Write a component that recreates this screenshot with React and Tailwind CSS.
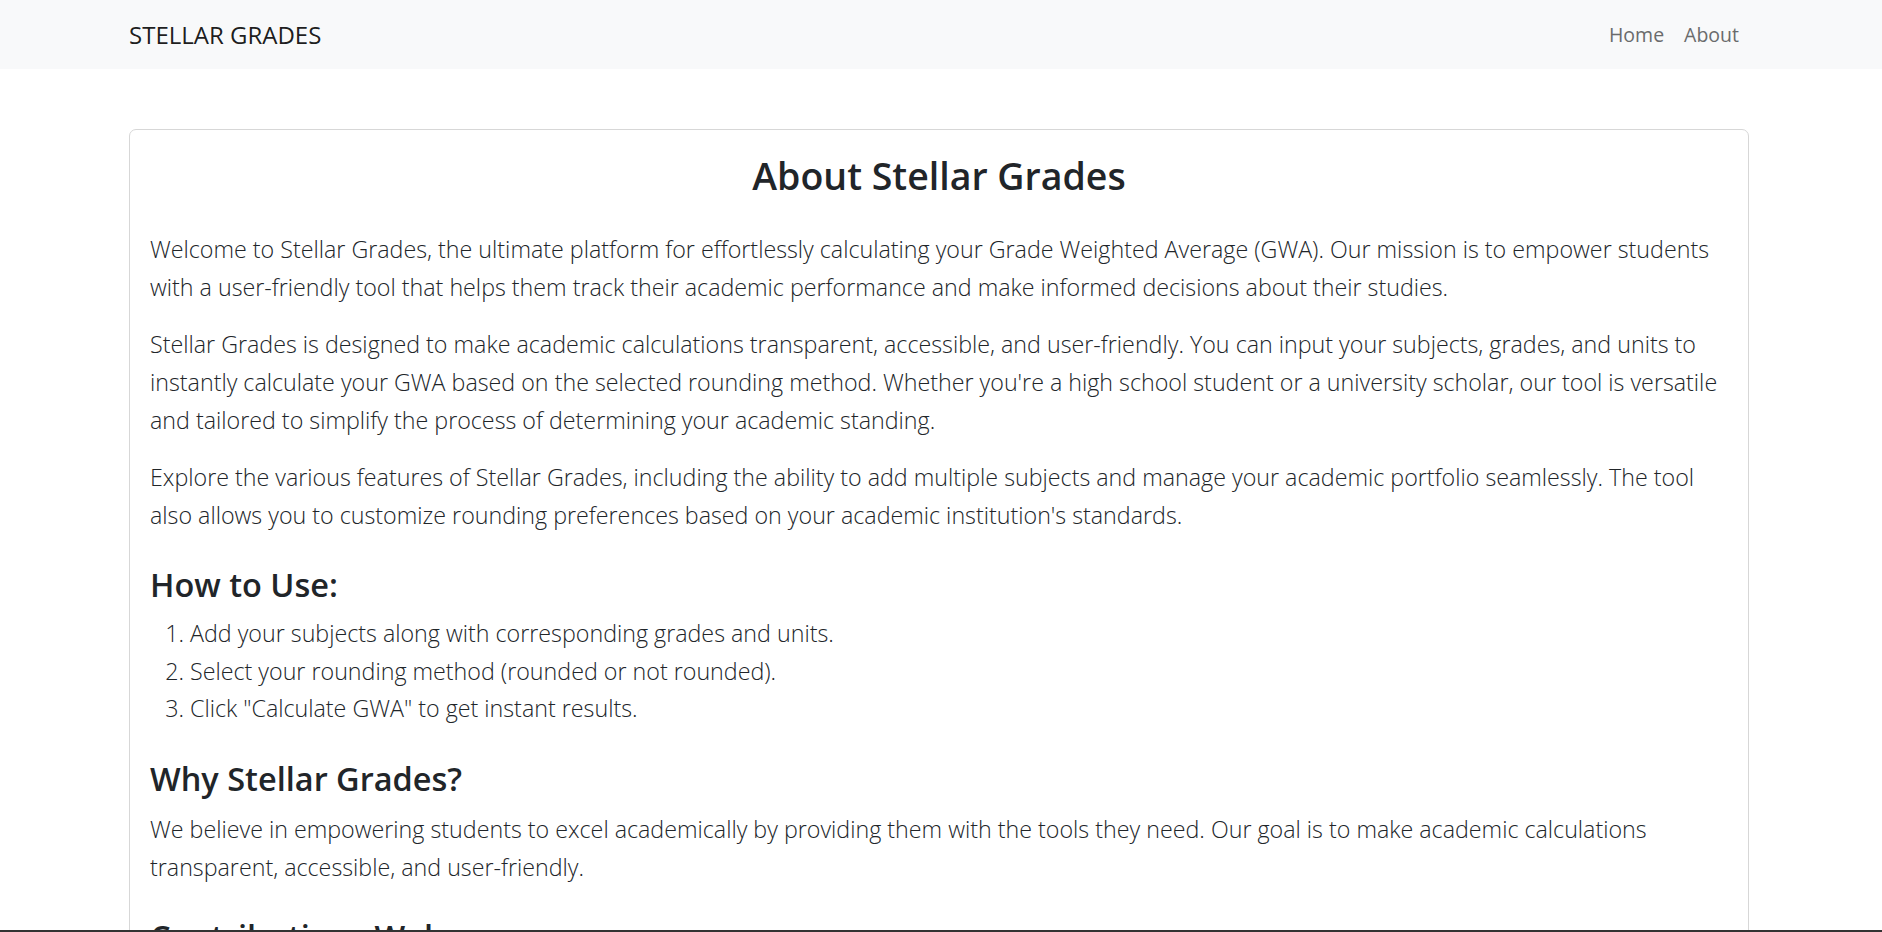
import React from 'react';

const paragraphs = [
    "Welcome to Stellar Grades, the ultimate platform for effortlessly calculating your Grade Weighted Average (GWA). Our mission is to empower students with a user-friendly tool that helps them track their academic performance and make informed decisions about their studies.",
    "Stellar Grades is designed to make academic calculations transparent, accessible, and user-friendly. You can input your subjects, grades, and units to instantly calculate your GWA based on the selected rounding method. Whether you're a high school student or a university scholar, our tool is versatile and tailored to simplify the process of determining your academic standing.",
    "Explore the various features of Stellar Grades, including the ability to add multiple subjects and manage your academic portfolio seamlessly. The tool also allows you to customize rounding preferences based on your academic institution's standards.",
];

const steps = [
    'Add your subjects along with corresponding grades and units.',
    'Select your rounding method (rounded or not rounded).',
    'Click "Calculate GWA" to get instant results.',
];

export default function App() {
    return (
        <div className="min-h-screen bg-white text-[#212529] font-['Open_Sans','Noto_Sans',sans-serif]">
            {/* Navbar */}
            <nav className="h-[69px] bg-[#f8f9fa]">
                <div className="h-full w-[1620px] ml-[129px] flex items-center justify-between">
                    <a href="#" className="text-[24px] text-black/90 no-underline">STELLAR GRADES</a>
                    <div className="flex items-center">
                        <a href="#" className="px-[10px] text-[19.5px] text-[#6a6b6c]">Home</a>
                        <a href="#" className="px-[10px] text-[19.5px] text-[#6a6b6c]">About</a>
                    </div>
                </div>
            </nav>

            {/* About card */}
            <main className="ml-[129px] w-[1620px] mt-[60px]">
                <div className="border border-[#d7d7d7] rounded-[7px] p-[20px]">
                    <h1 className="text-center text-[37.5px] leading-[52px] font-semibold mb-[28px]">About Stellar Grades</h1>

                    {paragraphs.map((p, i) => (
                        <p key={i} className="text-[23.25px] leading-[38px] font-light mb-[19px]">{p}</p>
                    ))}

                    <h3 className="mt-[31px] mb-[10px] text-[32.5px] leading-[40px] font-semibold">How to Use:</h3>
                    <ol className="list-decimal pl-[40px] mb-[20px] text-[23.25px] leading-[37.5px] font-light">
                        {steps.map((s, i) => (
                            <li key={i}>{s}</li>
                        ))}
                    </ol>

                    <h3 className="mt-[31px] mb-[11px] text-[32.5px] leading-[40px] font-semibold">Why Stellar Grades?</h3>
                    <p className="text-[23.25px] leading-[38px] font-light mb-[20px]">
                        We believe in empowering students to excel academically by providing them with the tools they need. Our goal is to make academic calculations transparent, accessible, and user-friendly.
                    </p>

                    <h3 className="mt-[31px] mb-[11px] text-[32.5px] leading-[40px] font-semibold">Contributions Welcome:</h3>
                </div>
            </main>

            {/* window edge */}
            <div className="fixed left-0 right-0 bottom-0 h-[2px] bg-[#333]"></div>
        </div>
    );
}
